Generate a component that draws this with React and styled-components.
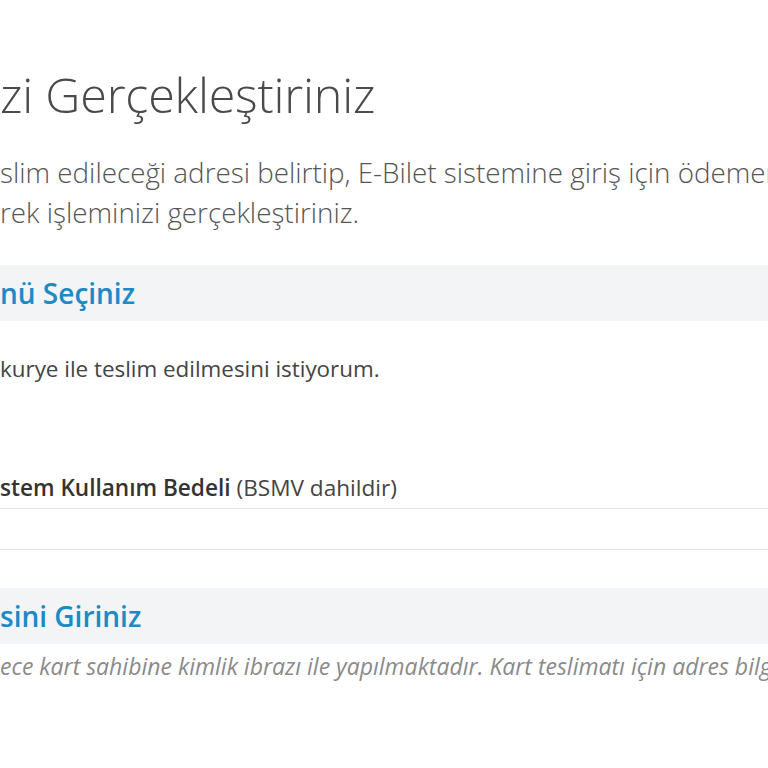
import styled, { createGlobalStyle } from "styled-components"

const Global = createGlobalStyle`
  html, body {
    margin: 0;
    padding: 0;
    background: #fff;
  }
  body {
    font-family: "Open Sans", "Liberation Sans", sans-serif;
    color: #444;
  }
`

const Page = styled.div`
  width: 768px;
  height: 768px;
  overflow: hidden;
  padding-top: 64px;
  box-sizing: border-box;
`

const Line = styled.div`
  white-space: nowrap;
  padding-left: ${p => p.indent || 0}px;
`

const Title = styled(Line)`
  font-size: 48.5px;
  font-weight: 300;
  line-height: 60px;
  color: #4a4a4a;
  letter-spacing: -0.2px;
`

const Lead = styled.div`
  margin-top: 28px;
  font-size: 27.8px;
  font-weight: 300;
  line-height: 40px;
  color: #555;
`

const Band = styled.div`
  margin-top: ${p => p.top || 0}px;
  height: 56px;
  background: #f3f4f5;
  display: flex;
  align-items: center;
  font-size: 28px;
  font-weight: 600;
  color: #1b8ac5;
  white-space: nowrap;
`

const Option = styled(Line)`
  margin-top: 34px;
  font-size: 22.4px;
  line-height: 28px;
  color: #444;
`

const Row = styled.div`
  height: ${p => p.h}px;
  display: flex;
  align-items: center;
  border-bottom: 1px solid #e0e0e0;
  font-size: 22.6px;
  color: #444;
  white-space: nowrap;
  margin-top: ${p => p.top || 0}px;
`

const Strong = styled.span`
  font-weight: 600;
  color: #333;
  margin-right: 6px;
`

const Note = styled(Line)`
  margin-top: 8px;
  font-size: 23px;
  font-style: italic;
  line-height: 28px;
  color: #8a8a8a;
`

export default function App() {
  return (
    <Page>
      <Global />
      <Title>zi Gerçekleştiriniz</Title>
      <Lead>
        <Line>slim edileceği adresi belirtip, E-Bilet sistemine giriş için ödemenizi</Line>
        <Line>rek işleminizi gerçekleştiriniz.</Line>
      </Lead>
      <Band top={33}>nü Seçiniz</Band>
      <Option> kurye ile teslim edilmesini istiyorum.</Option>
      <Row h={42} top={83}>
        <Strong>stem Kullanım Bedeli</Strong>(BSMV dahildir)
      </Row>
      <Row h={40} />
      <Band top={38}>sini Giriniz</Band>
      <Note>ece kart sahibine kimlik ibrazı ile yapılmaktadır. Kart teslimatı için adres bilgilerinizi</Note>
    </Page>
  )
}
